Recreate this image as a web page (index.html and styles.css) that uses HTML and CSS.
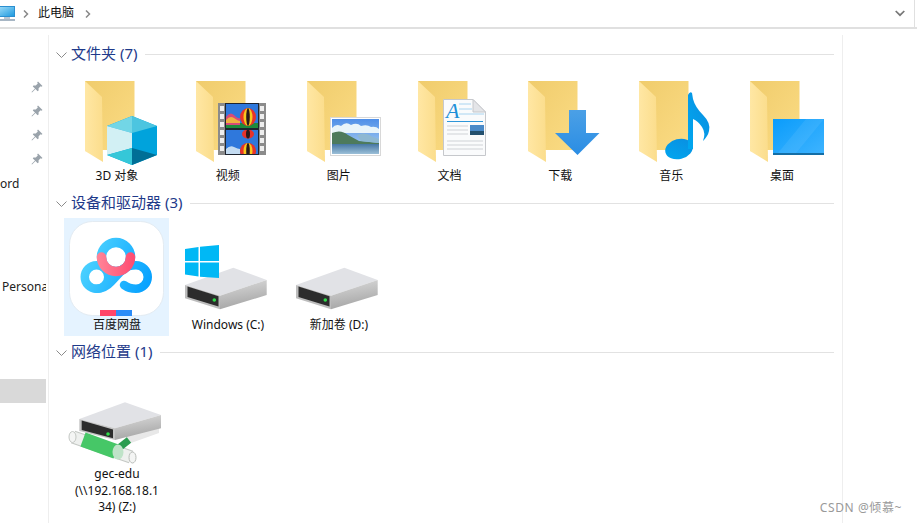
FILE: index.html
```html
<!DOCTYPE html>
<html lang="zh-CN">
<head>
    <meta charset="UTF-8">
    <title>此电脑</title>
    <link rel="stylesheet" href="styles.css">
</head>
<body>
    <!-- Address bar -->
    <div class="addressbar">
        <svg class="pc-icon" width="15" height="16" viewBox="0 0 15 16">
            <defs>
                <linearGradient id="pcBlue" x1="0" y1="0" x2="1" y2="1"><stop offset="0" stop-color="#9fdcf8"/><stop offset="1" stop-color="#1f9be0"/></linearGradient>
            </defs>
            <rect x="-2" y="0" width="17" height="11" fill="#2b8fd0"/>
            <rect x="-2" y="1" width="16" height="9" fill="url(#pcBlue)"/>
            <rect x="4" y="11" width="6" height="2" fill="#b9c6d2"/>
            <rect x="0" y="13" width="15" height="2" fill="#a7b6c4"/>
        </svg>
        <svg class="crumb-arrow" width="6" height="8" viewBox="0 0 6 8"><path d="M1 0.5L4.5 4L1 7.5" fill="none" stroke="#888" stroke-width="1.5"/></svg>
        <span class="crumb">此电脑</span>
        <svg class="crumb-arrow" width="6" height="8" viewBox="0 0 6 8"><path d="M1 0.5L4.5 4L1 7.5" fill="none" stroke="#888" stroke-width="1.5"/></svg>
        <div class="bar-end">
            <svg width="10" height="7" viewBox="0 0 10 7"><path d="M0.7 1L5 5.2L9.3 1" fill="none" stroke="#777" stroke-width="1.7"/></svg>
        </div>
    </div>

    <div class="content">
        <!-- Navigation pane, cut off at the left -->
        <div class="sidebar">
            <div class="nav-row"><svg class="pin" width="12" height="12" viewBox="0 0 12 12"><path d="M7 0.5L11.5 5L10.4 5.8L9.6 5.2L7.6 7.2L7.6 9.6L6.6 10.2L4.5 8L1 11.5L0.5 11L4 7.5L1.8 5.4L2.4 4.4L4.8 4.4L6.8 2.4L6.2 1.6Z" fill="#9aa3ab"/></svg></div>
            <div class="nav-row"><svg class="pin" width="12" height="12" viewBox="0 0 12 12"><path d="M7 0.5L11.5 5L10.4 5.8L9.6 5.2L7.6 7.2L7.6 9.6L6.6 10.2L4.5 8L1 11.5L0.5 11L4 7.5L1.8 5.4L2.4 4.4L4.8 4.4L6.8 2.4L6.2 1.6Z" fill="#9aa3ab"/></svg></div>
            <div class="nav-row"><svg class="pin" width="12" height="12" viewBox="0 0 12 12"><path d="M7 0.5L11.5 5L10.4 5.8L9.6 5.2L7.6 7.2L7.6 9.6L6.6 10.2L4.5 8L1 11.5L0.5 11L4 7.5L1.8 5.4L2.4 4.4L4.8 4.4L6.8 2.4L6.2 1.6Z" fill="#9aa3ab"/></svg></div>
            <div class="nav-row"><svg class="pin" width="12" height="12" viewBox="0 0 12 12"><path d="M7 0.5L11.5 5L10.4 5.8L9.6 5.2L7.6 7.2L7.6 9.6L6.6 10.2L4.5 8L1 11.5L0.5 11L4 7.5L1.8 5.4L2.4 4.4L4.8 4.4L6.8 2.4L6.2 1.6Z" fill="#9aa3ab"/></svg></div>
            <div class="nav-row nav-text">ord</div>
            <div class="nav-row nav-text nav-persona">Persona</div>
            <div class="nav-row nav-selected"></div>
        </div>

        <div class="main">
            <!-- Folders -->
            <div class="section">
                <div class="section-head">
                    <svg width="11" height="6" viewBox="0 0 11 6"><path d="M0.5 0.5L5.5 5.5L10.5 0.5" fill="none" stroke="#8a8a8a"/></svg>
                    <span class="section-title">文件夹 (7)</span>
                    <div class="section-line"></div>
                </div>
                <div class="row">
                    <div class="item">
                        <svg class="icon" viewBox="0 0 96 96">
                            <defs>
                                <linearGradient id="folderBack" x1="0" y1="0" x2="1" y2="1"><stop offset="0" stop-color="#f0cc6c"/><stop offset="1" stop-color="#fbdc85"/></linearGradient>
                                <linearGradient id="folderFront" x1="0" y1="0" x2="1" y2="0"><stop offset="0" stop-color="#ffe7a4"/><stop offset="1" stop-color="#fbdd8c"/></linearGradient>
                                <linearGradient id="waterBlue" x1="0" y1="0" x2="0" y2="1"><stop offset="0" stop-color="#3d6f9e"/><stop offset="1" stop-color="#9cc0d8"/></linearGradient>
                                <linearGradient id="skyBlue" x1="0" y1="0" x2="0" y2="1"><stop offset="0" stop-color="#4f8fe8"/><stop offset="1" stop-color="#b6d8f2"/></linearGradient>
                                <linearGradient id="arrowBlue" x1="0" y1="0" x2="0" y2="1"><stop offset="0" stop-color="#4ba0e6"/><stop offset="1" stop-color="#2a8de4"/></linearGradient>
                                <linearGradient id="noteBlue" x1="0" y1="1" x2="1" y2="0"><stop offset="0" stop-color="#00a8f0"/><stop offset="1" stop-color="#0a8de0"/></linearGradient>
                                <linearGradient id="screenBlue" x1="0" y1="0" x2="1" y2="1"><stop offset="0" stop-color="#0a9cfb"/><stop offset="1" stop-color="#3fb4ff"/></linearGradient>
                                <linearGradient id="driveSide" x1="0" y1="0" x2="0.25" y2="1"><stop offset="0" stop-color="#dcdcdc"/><stop offset="1" stop-color="#a6a6a6"/></linearGradient>
                                <linearGradient id="baiduBlue" gradientUnits="userSpaceOnUse" x1="15" y1="30" x2="80" y2="60"><stop offset="0" stop-color="#4fd4ff"/><stop offset="1" stop-color="#08a2ff"/></linearGradient>
                                <linearGradient id="baiduPink" gradientUnits="userSpaceOnUse" x1="30" y1="35" x2="64" y2="35"><stop offset="0" stop-color="#ff8296"/><stop offset="1" stop-color="#ff4d72"/></linearGradient>
                                <clipPath id="filmClip"><rect x="46" y="31" width="32" height="24"/><rect x="46" y="57" width="32" height="24"/></clipPath>
                                <symbol id="folder" viewBox="0 0 96 96">
                                    <path d="M16 8H65.5V77H28V80L16 78Z" fill="url(#folderBack)"/>
                                    <path d="M16 8L33 24L34 89L16 78Z" fill="url(#folderFront)"/>
                                </symbol>
                                <symbol id="drive" viewBox="0 0 96 96">
                                    <path d="M5 63L53.3 45.7L86.7 58L40 73.7Z" fill="#e1e2e6"/>
                                    <path d="M40 73.7L86.7 58V73L40 87.3Z" fill="url(#driveSide)"/>
                                    <path d="M5 63L40 73.7V87.3L5 76.3Z" fill="#bdbdbd"/>
                                    <path d="M7.5 64.5L38.5 74.2V84.5L7.5 75Z" fill="#2c2c2c"/>
                                    <circle cx="34.3" cy="78" r="1.8" fill="#2fdc4a"/>
                                </symbol>
                            </defs>
                            <use href="#folder"/>
                            <path d="M63 43L88 53V82L63 92L38 82V53Z" fill="#00a3dc"/>
                            <path d="M63 43L88 53L63 60Z" fill="#4cc5e0"/>
                            <path d="M63 43L38 53L63 60Z" fill="#72d6e6"/>
                            <path d="M38 53L63 60V75L38 82Z" fill="#d2f0f4"/>
                            <path d="M38 82L63 75V92Z" fill="#35c7d8"/>
                            <path d="M88 82L63 75V92Z" fill="#006f96"/>
                        </svg>
                        <div class="label">3D 对象</div>
                    </div>
                    <div class="item">
                        <svg class="icon" viewBox="0 0 96 96">
                            <use href="#folder"/>
                            <rect x="38" y="30" width="48" height="52" fill="#8b8b8b"/>
                            <rect x="45" y="30" width="34" height="52" fill="#1e2430"/>
                            <g fill="#eee">
                                <rect x="40" y="33" width="4" height="5"/><rect x="40" y="41" width="4" height="5"/><rect x="40" y="49" width="4" height="5"/><rect x="40" y="57" width="4" height="5"/><rect x="40" y="65" width="4" height="5"/><rect x="40" y="73" width="4" height="5"/>
                                <rect x="80" y="33" width="4" height="5"/><rect x="80" y="41" width="4" height="5"/><rect x="80" y="49" width="4" height="5"/><rect x="80" y="57" width="4" height="5"/><rect x="80" y="65" width="4" height="5"/><rect x="80" y="73" width="4" height="5"/>
                            </g>
                            <g clip-path="url(#filmClip)">
                                <rect x="46" y="31" width="32" height="50" fill="#2f78dc"/>
                                <rect x="46" y="50" width="32" height="5" fill="#1f8a3c"/>
                                <path d="M46 44Q50 38 54 42T60 45V52H46Z" fill="#d84a78"/>
                                <path d="M46 47Q50 42 54 45T60 48V50H46Z" fill="#f0b040"/>
                                <path d="M46 76Q50 72 54 74T60 76V81H46Z" fill="#c4dcf2"/>
                                <ellipse cx="68" cy="44" rx="8" ry="9" fill="#e8322a"/>
                                <ellipse cx="68" cy="44" rx="4.5" ry="9" fill="#f8c81e"/>
                                <ellipse cx="68" cy="44" rx="1.8" ry="9" fill="#2a1a1a"/>
                                <ellipse cx="68" cy="61" rx="6" ry="4.5" fill="#e8322a"/>
                                <ellipse cx="68" cy="61" rx="2" ry="4.5" fill="#2a1a1a"/>
                                <ellipse cx="68" cy="78" rx="8" ry="8" fill="#e8322a"/>
                                <ellipse cx="68" cy="78" rx="4.5" ry="8" fill="#f8c81e"/>
                                <ellipse cx="68" cy="78" rx="1.8" ry="8" fill="#2a1a1a"/>
                            </g>
                        </svg>
                        <div class="label">视频</div>
                    </div>
                    <div class="item">
                        <svg class="icon" viewBox="0 0 96 96">
                            <use href="#folder"/>
                            <rect x="39.5" y="44.5" width="50" height="38" fill="#fff" stroke="#d8d8d8"/>
                            <rect x="41" y="46" width="47" height="35" fill="url(#skyBlue)"/>
                            <path d="M41 55Q45 50 50 53Q55 48 60 52Q66 49 70 53Q76 51 80 54Q85 53 88 56V60H41Z" fill="#e8f4fa"/>
                            <rect x="41" y="70" width="47" height="11" fill="url(#waterBlue)"/>
                            <path d="M41 60Q50 56 57 62L68 68L88 70V71H41Z" fill="#4d7a5c"/>
                            <path d="M66 62Q74 58 82 64L88 66V70L70 68Z" fill="#8db8d2"/>
                        </svg>
                        <div class="label">图片</div>
                    </div>
                    <div class="item">
                        <svg class="icon" viewBox="0 0 96 96">
                            <use href="#folder"/>
                            <path d="M41.5 26.5H71L83.5 39V82.5H41.5Z" fill="#fafbfc" stroke="#c6c8cc"/>
                            <path d="M71 26.5V39H83.5Z" fill="#e4e5e8" stroke="#c6c8cc"/>
                            <text x="44" y="45" class="doc-a">A</text>
                            <path d="M57 31H69M57 36H70M57 41H82" stroke="#a8d4f0" stroke-width="1"/>
                            <path d="M45 48.5H81" stroke="#2e96d8" stroke-width="1"/>
                            <path d="M45 53H66M45 57H66M45 61H66M45 68H81M45 72H81M45 76H81" stroke="#cfd2d6" stroke-width="1"/>
                            <rect x="68" y="52" width="14" height="10" fill="#4a8ac8"/>
                            <rect x="68" y="58" width="14" height="4" fill="#24506e"/>
                        </svg>
                        <div class="label">文档</div>
                    </div>
                    <div class="item">
                        <svg class="icon" viewBox="0 0 96 96">
                            <use href="#folder"/>
                            <path d="M57 37H74V60H87.5L65.5 82L43 60H57Z" fill="url(#arrowBlue)"/>
                        </svg>
                        <div class="label">下载</div>
                    </div>
                    <div class="item">
                        <svg class="icon" viewBox="0 0 96 96">
                            <use href="#folder"/>
                            <ellipse cx="56" cy="76" rx="14" ry="10" transform="rotate(-14 56 76)" fill="url(#noteBlue)"/>
                            <path d="M65 22Q67 18 69 20L70 26Q72 34 80 42Q88 50 86 58Q85 63 80 68Q83 60 79 54Q75 48 70 46V76H65Z" fill="url(#noteBlue)"/>
                        </svg>
                        <div class="label">音乐</div>
                    </div>
                    <div class="item">
                        <svg class="icon" viewBox="0 0 96 96">
                            <use href="#folder"/>
                            <rect x="39" y="46" width="51" height="36" fill="url(#screenBlue)"/>
                            <path d="M44 80L72 46H90L62 80Z" fill="#fff" opacity="0.07"/>
                            <rect x="39" y="80" width="51" height="2" fill="#146ea6"/>
                        </svg>
                        <div class="label">桌面</div>
                    </div>
                </div>
            </div>

            <!-- Drives -->
            <div class="section">
                <div class="section-head">
                    <svg width="11" height="6" viewBox="0 0 11 6"><path d="M0.5 0.5L5.5 5.5L10.5 0.5" fill="none" stroke="#8a8a8a"/></svg>
                    <span class="section-title">设备和驱动器 (3)</span>
                    <div class="section-line"></div>
                </div>
                <div class="row">
                    <div class="item selected">
                        <svg class="icon" viewBox="0 0 96 96">
                            <rect x="0.5" y="-0.5" width="94" height="94" rx="23" fill="#fff" stroke="#e3ebf2"/>
                            <circle cx="47" cy="35" r="14.5" fill="none" stroke="url(#baiduBlue)" stroke-width="9.5"/>
                            <circle cx="27.5" cy="55" r="11.75" fill="none" stroke="url(#baiduBlue)" stroke-width="8.5"/>
                            <path d="M27.5 66.75Q36 66.75 42 60L54 47Q59 43.25 67 43.25A11.75 11.75 0 1 1 67 66.75Q60 66.75 55 63" fill="none" stroke="url(#baiduBlue)" stroke-width="8.5" stroke-linecap="round"/>
                            <path d="M32.5 35A14.5 14.5 0 0 0 61.5 35" fill="none" stroke="url(#baiduPink)" stroke-width="9.5" stroke-linecap="round"/>
                            <rect x="31" y="88" width="16" height="6" fill="#ff4468"/>
                            <rect x="47" y="88" width="16" height="6" fill="#2b8cf8"/>
                        </svg>
                        <div class="label">百度网盘</div>
                    </div>
                    <div class="item">
                        <svg class="icon" viewBox="0 0 96 96">
                            <use href="#drive"/>
                            <path d="M5 27L18.5 25V39H5ZM20 24.8L39 23V39H20ZM5 40.5H18.5V54.5L5 52.5ZM20 40.5H39V56L20 54.7Z" fill="#00b8f5"/>
                        </svg>
                        <div class="label">Windows (C:)</div>
                    </div>
                    <div class="item">
                        <svg class="icon" viewBox="0 0 96 96"><use href="#drive"/></svg>
                        <div class="label">新加卷 (D:)</div>
                    </div>
                </div>
            </div>

            <!-- Network locations -->
            <div class="section">
                <div class="section-head">
                    <svg width="11" height="6" viewBox="0 0 11 6"><path d="M0.5 0.5L5.5 5.5L10.5 0.5" fill="none" stroke="#8a8a8a"/></svg>
                    <span class="section-title">网络位置 (1)</span>
                    <div class="section-line"></div>
                </div>
                <div class="row">
                    <div class="item">
                        <svg class="icon" viewBox="0 0 96 96">
                            <path d="M4 66L62 86" stroke="#c4c8c4" stroke-width="13"/>
                            <path d="M4 66L62 86" stroke="#eef0ee" stroke-width="11"/>
                            <ellipse cx="3.5" cy="66" rx="3.5" ry="5.5" fill="#f4f5f4" stroke="#c4c8c4"/>
                            <path d="M50 58L90 50V62L62 72Z" fill="#e8e8e8"/>
                            <path d="M10.3 48L56 31.3L92 44L46 57.3Z" fill="#e1e2e6"/>
                            <path d="M46 57.3L92 44V57.3L46 69Z" fill="url(#driveSide)"/>
                            <path d="M10.3 48L46 57.3V69L10.3 60Z" fill="#c4c4c4"/>
                            <path d="M12.7 49.5L44 58.5V67.3L12.7 59Z" fill="#2c2c2c"/>
                            <circle cx="39" cy="63" r="1.8" fill="#2fdc4a"/>
                            <path d="M46 80L60 69" stroke="#2b9c50" stroke-width="7"/>
                            <path d="M14 68.5L47 80.5" stroke="#46c767" stroke-width="15"/>
                            <ellipse cx="49" cy="81" rx="5.5" ry="7.5" fill="#bfe3c8"/>
                            <ellipse cx="63.5" cy="86.5" rx="3.5" ry="5.5" fill="#f4f5f4" stroke="#b8bcb8"/>
                        </svg>
                        <div class="label">gec-edu<br>(\\192.168.18.1<br>34) (Z:)</div>
                    </div>
                </div>
            </div>
        </div>
    </div>

    <div class="watermark">CSDN @倾慕~</div>
</body>
</html>
```

FILE: styles.css
```css
body {
    font-family: "Noto Sans", "Noto Sans CJK SC", sans-serif;
    font-size: 12px;
    margin: 0;
    width: 917px;
    height: 523px;
    overflow: hidden;
    background-color: #fff;
    color: #000;
    position: relative;
}

/* address bar */
.addressbar {
    display: flex;
    align-items: center;
    height: 27px;
    border-bottom: 2px solid #e0e0e0;
}
.pc-icon {
    margin-top: 1px;
}
.crumb-arrow {
    margin-left: 8px;
    margin-right: 10px;
}
.crumb {
    margin-left: -1px;
    margin-right: 3px;
    margin-bottom: 3px;
    color: #111;
}
.bar-end {
    display: flex;
    align-items: center;
    margin-left: auto;
    margin-right: 2px;
    height: 100%;
    padding-right: 9px;
    border-right: 1px solid #e0e0e0;
}

.content {
    display: flex;
}

/* navigation pane */
.sidebar {
    width: 46px;
    padding-right: 2px;
    height: 448px;
    margin-top: 6px;
    padding-top: 40px;
    border-right: 1px solid #eeeeee;
    overflow: hidden;
}
.nav-row {
    display: flex;
    align-items: center;
    height: 24px;
    white-space: nowrap;
    overflow: hidden;
}
.pin {
    margin-left: 31px;
}
.nav-text {
    color: #222;
}
.nav-persona {
    margin-top: 79px;
    padding-left: 2px;
}
.nav-selected {
    margin-top: 81px;
    background-color: #d9d9d9;
}

/* main pane */
.main {
    width: 778px;
    height: 480px;
    margin-top: 6px;
    padding: 9px 8px 0 7px;
    border-right: 1px solid #eeeeee;
}
.section {
    margin-bottom: 6px;
}
.section-head {
    display: flex;
    align-items: center;
    height: 21px;
    margin-bottom: 4px;
}
.section-title {
    margin-left: 4px;
    margin-right: 8px;
    margin-bottom: 4px;
    font-size: 15px;
    color: #1e3a8a;
    white-space: nowrap;
}
.section-line {
    flex: 1;
    height: 1px;
    background-color: #e2e2e2;
}
.row {
    display: flex;
    gap: 6px;
    margin-left: 8px;
}
.item {
    width: 105px;
    height: 118px;
    display: flex;
    flex-direction: column;
    align-items: center;
    padding: 4px 0 0 1px;
    box-sizing: border-box;
}
.item.selected {
    background-color: #e5f3ff;
}
.icon {
    width: 96px;
    height: 96px;
    flex: none;
    overflow: visible;
}
.label {
    margin-top: -1px;
    line-height: 16.5px;
    text-align: center;
    white-space: nowrap;
    color: #111;
}
.doc-a {
    font-family: "Liberation Serif", serif;
    font-style: italic;
    font-size: 22px;
    fill: #1e90d8;
}

.watermark {
    position: absolute;
    right: 15px;
    bottom: 7px;
    color: #999;
    font-size: 12px;
    letter-spacing: 0.6px;
    white-space: nowrap;
}
```
